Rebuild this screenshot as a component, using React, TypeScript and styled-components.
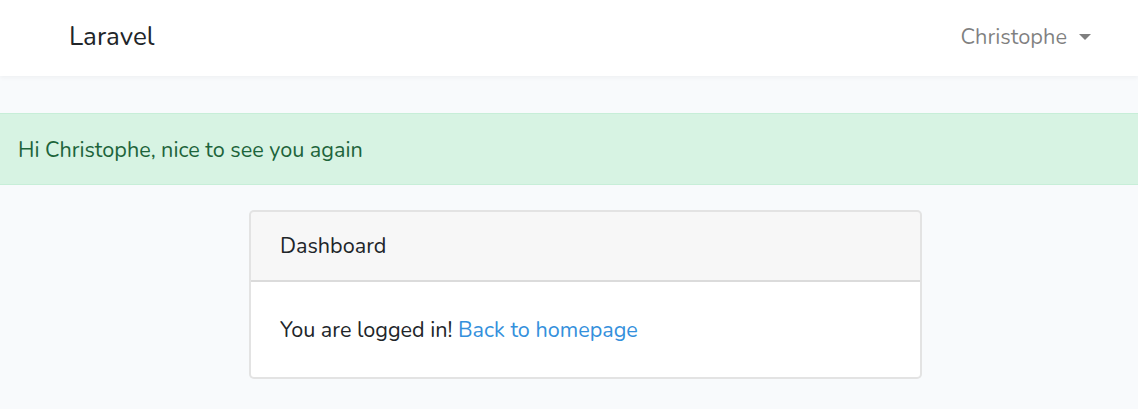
import React from "react";
import styled, { createGlobalStyle } from "styled-components";

const Global = createGlobalStyle`
  html, body { margin: 0; padding: 0; }
  body {
    background: #f8fafc;
    font-family: "Nunito", "Lato", "Open Sans", sans-serif;
    font-size: 21.6px;
    line-height: 32px;
    color: #212529;
  }
`;

const Navbar = styled.nav`
  height: 76px;
  background: #fff;
  box-shadow: 0 2px 4px rgba(0, 0, 0, 0.04);
  display: flex;
  align-items: center;
  justify-content: space-between;
  padding: 0 47px 3px 69px;
  box-sizing: border-box;
`;

const Brand = styled.a`
  font-size: 26px;
  color: #212529;
  text-decoration: none;
  line-height: 1;
`;

const UserMenu = styled.a`
  display: flex;
  align-items: center;
  gap: 12px;
  color: rgba(0, 0, 0, 0.5);
  font-size: 21.8px;
  text-decoration: none;
`;

const Caret = styled.span`
  width: 0;
  height: 0;
  border-left: 6px solid transparent;
  border-right: 6px solid transparent;
  border-top: 6px solid rgba(0, 0, 0, 0.5);
`;

const Main = styled.main`
  padding-top: 37px;
`;

const Alert = styled.div`
  background: #d7f3e3;
  border-top: 1px solid #c7eed8;
  border-bottom: 1px solid #c7eed8;
  color: #1d643b;
  padding: 20px 18px 18px;
`;

const Card = styled.div`
  width: 673px;
  margin: 25px 0 0 249px;
  box-sizing: border-box;
  background: #fff;
  border: 2px solid rgba(0, 0, 0, 0.11);
  border-radius: 5px;
  overflow: hidden;
`;

const CardHeader = styled.div`
  background: rgba(0, 0, 0, 0.03);
  border-bottom: 2px solid rgba(0, 0, 0, 0.11);
  padding: 18px 29px;
`;

const CardBody = styled.div`
  padding: 32px 29px 31px;
`;

const Link = styled.a`
  color: #3490dc;
  text-decoration: none;
`;

export default function App() {
  return (
    <>
      <Global />
      <Navbar>
        <Brand href="#">Laravel</Brand>
        <UserMenu href="#">
          Christophe
          <Caret />
        </UserMenu>
      </Navbar>
      <Main>
        <Alert>Hi Christophe, nice to see you again</Alert>
        <Card>
          <CardHeader>Dashboard</CardHeader>
          <CardBody>
            You are logged in! <Link href="#">Back to homepage</Link>
          </CardBody>
        </Card>
      </Main>
    </>
  );
}
